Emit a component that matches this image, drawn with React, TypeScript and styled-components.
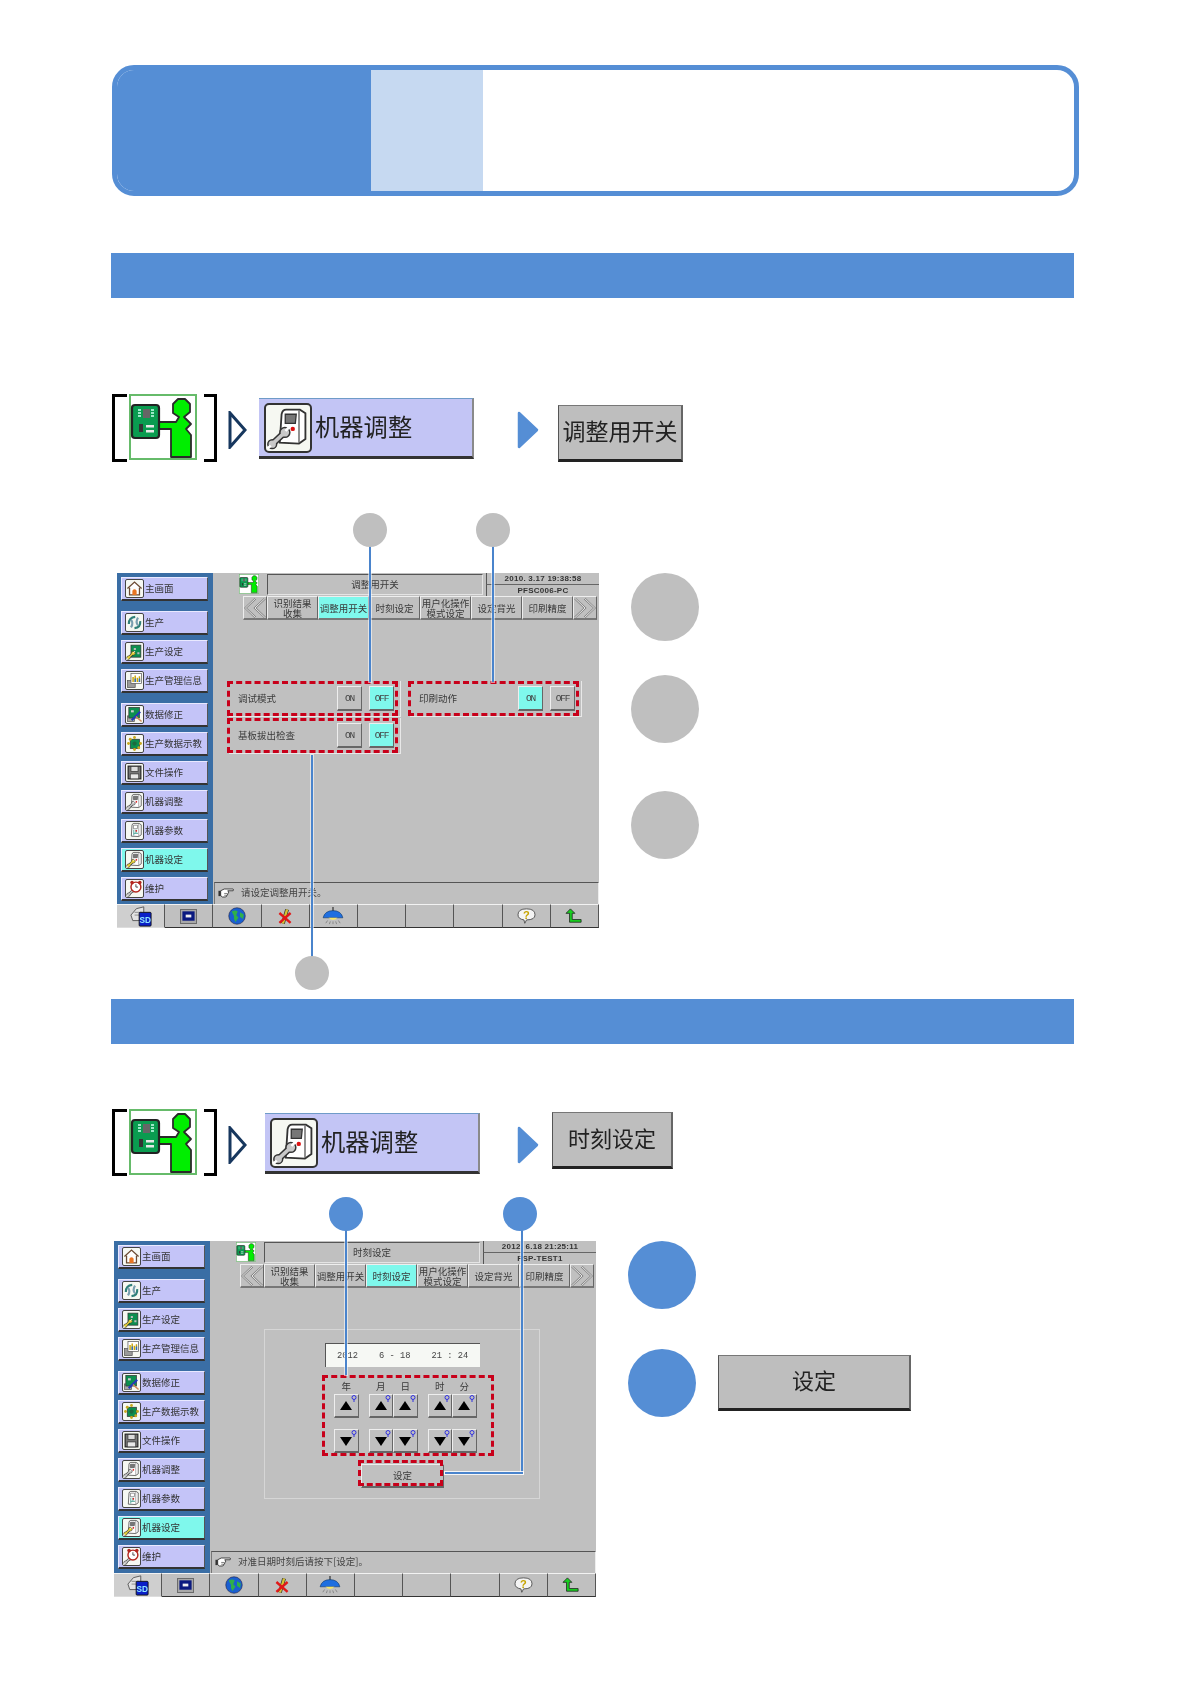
import React from "react";
import styled, { createGlobalStyle } from "styled-components";

const BLUE = "#558ed5";
const CJK = `"Noto Sans CJK SC", "Liberation Sans", sans-serif`;
const MONO = `"Liberation Mono", "DejaVu Sans Mono", monospace`;

const Global = createGlobalStyle`
  html, body { margin: 0; padding: 0; background: #fff; }
  body { font-family: ${CJK}; }
`;

const Page = styled.div`
  width: 1190px;
  height: 1684px;
  box-sizing: border-box;
  padding: 65px 0 0 112px;
  overflow: hidden;
`;

const TitleBox = styled.div`
  display: flex;
  width: 967px;
  height: 131px;
  box-sizing: border-box;
  border: 5px solid ${BLUE};
  border-radius: 22px;
  overflow: hidden;
`;
const TitleHead = styled.div`
  width: 254px;
  background: ${BLUE};
`;
const TitleNo = styled.div`
  width: 112px;
  background: #c6d9f1;
`;

const SectionBar = styled.div<{ $top: number }>`
  width: 963px;
  height: 45px;
  margin: ${(p) => p.$top}px 0 0 -1px;
  background: ${BLUE};
`;

const FlowRow = styled.div<{ $top: number; $h: number }>`
  display: flex;
  align-items: flex-start;
  height: ${(p) => p.$h}px;
  margin-top: ${(p) => p.$top}px;
`;
const Bracket = styled.div<{ $right?: boolean }>`
  width: ${(p) => (p.$right ? 13 : 15)}px;
  height: 100%;
  box-sizing: border-box;
  border: 3px solid #000;
  border-${(p) => (p.$right ? "left" : "right")}: 0;
  margin: ${(p) => (p.$right ? "0 0 0 7px" : "0 2px 0 0")};
`;
const FlowIcon = styled.div`
  width: 68px;
  height: 66px;
  flex: none;
  filter: blur(0.4px);
`;
const FlowMark = styled.div<{ $top: number; $left: number }>`
  display: flex;
  margin: ${(p) => p.$top}px 0 0 ${(p) => p.$left}px;
`;
const MachineButton = styled.div<{ $top: number; $left: number }>`
  display: flex;
  align-items: center;
  gap: 3px;
  width: 215px;
  height: 61px;
  box-sizing: border-box;
  margin: ${(p) => p.$top}px 0 0 ${(p) => p.$left}px;
  padding-left: 5px;
  background: #c3c5f5;
  border-top: 1px solid #6f9bc8;
  border-right: 2px solid #8a8a8a;
  border-bottom: 3px solid #333;
  font-size: 24.3px;
  color: #222;
  filter: blur(0.35px);
`;
const MachineLabel = styled.span`
  margin-bottom: 5px;
  white-space: nowrap;
`;
const MachineFrame = styled.div`
  width: 48px;
  height: 50px;
  flex: none;
  box-sizing: border-box;
  border: 2px solid #333;
  border-radius: 5px;
  background: #f6f8f2;
`;
const GrayButton = styled.div<{ $w: number; $h: number; $top: number; $left: number; $size: number }>`
  display: flex;
  align-items: center;
  justify-content: center;
  flex: none;
  width: ${(p) => p.$w}px;
  height: ${(p) => p.$h}px;
  box-sizing: border-box;
  margin: ${(p) => p.$top}px 0 0 ${(p) => p.$left}px;
  padding-bottom: 6px;
  background: #bebebe;
  border-left: 1px solid #555;
  border-top: 1px solid #777;
  border-right: 2px solid #666;
  border-bottom: 3px solid #222;
  font-size: ${(p) => p.$size}px;
  color: #222;
  white-space: nowrap;
  filter: blur(0.35px);
`;

const Stage = styled.div<{ $top: number; $inset: number }>`
  position: relative;
  display: flex;
  align-items: flex-start;
  margin-top: ${(p) => p.$top}px;
  padding-left: ${(p) => p.$inset}px;
`;
const Dot = styled.div<{ $x: number; $y: number; $color: string }>`
  position: absolute;
  left: ${(p) => p.$x - 17}px;
  top: ${(p) => p.$y - 17}px;
  width: 34px;
  height: 34px;
  border-radius: 50%;
  background: ${(p) => p.$color};
  z-index: 3;
`;
const VLine = styled.div<{ $x: number; $y: number; $h: number }>`
  position: absolute;
  left: ${(p) => p.$x - 1}px;
  top: ${(p) => p.$y}px;
  width: 2px;
  height: ${(p) => p.$h}px;
  background: #4a84cc;
  box-shadow: 0 0 0 1px rgba(255, 255, 255, 0.55);
  z-index: 2;
`;
const HLine = styled.div<{ $x: number; $y: number; $w: number }>`
  position: absolute;
  left: ${(p) => p.$x}px;
  top: ${(p) => p.$y - 1}px;
  width: ${(p) => p.$w}px;
  height: 2px;
  background: #4a84cc;
  box-shadow: 0 0 0 1px rgba(255, 255, 255, 0.85);
  z-index: 2;
`;

const Legend = styled.div`
  display: flex;
  flex-direction: column;
  margin-left: 32px;
`;
const LegendRow = styled.div<{ $top: number }>`
  display: flex;
  align-items: center;
  margin-top: ${(p) => p.$top}px;
`;
const LegendDot = styled.div<{ $color: string }>`
  width: 68px;
  height: 68px;
  border-radius: 50%;
  background: ${(p) => p.$color};
`;

const ScreenFrame = styled.div<{ $h: number }>`
  display: grid;
  grid-template-columns: 96px 1fr;
  grid-template-rows: 1fr 24px;
  width: 482px;
  height: ${(p) => p.$h}px;
  flex: none;
  background: #c0c0c0;
  color: #3a3a3a;
  font-size: 9.5px;
  line-height: 1;
  filter: blur(0.3px);
`;
const Sidebar = styled.div`
  display: flex;
  flex-direction: column;
  gap: 5px;
  padding: 4px 0 0 4px;
  background: #3a6ea5;
`;
const NavButton = styled.div<{ $active?: boolean; $group?: boolean }>`
  display: flex;
  align-items: center;
  gap: 1px;
  width: 87px;
  height: 24px;
  flex: none;
  box-sizing: border-box;
  margin-top: ${(p) => (p.$group ? 5 : 0)}px;
  padding-left: 3px;
  background: ${(p) => (p.$active ? "#7ff8ec" : "#c4c4f8")};
  border-top: 1px solid #e9e9ff;
  border-left: 1px solid #e9e9ff;
  border-right: 1px solid #555;
  border-bottom: 2px solid #333;
  color: #333;
  white-space: nowrap;
`;
const NavIcon = styled.span`
  display: flex;
  width: 19px;
  height: 19px;
  flex: none;
  box-sizing: border-box;
  border: 1px solid #444;
  border-radius: 2px;
  background: #f6f8f2;
`;
const Main = styled.div`
  display: flex;
  flex-direction: column;
  min-width: 0;
`;
const ScreenHead = styled.div`
  display: flex;
  height: 23px;
  flex: none;
  padding-left: 26px;
`;
const ScreenIcon = styled.div`
  width: 20px;
  height: 20px;
  margin: 1px 8px 0 0;
`;
const ScreenTitle = styled.div`
  display: flex;
  align-items: center;
  justify-content: center;
  width: 216px;
  height: 21px;
  box-sizing: border-box;
  margin-top: 1px;
  border: 1px solid #e4e4e4;
  border-top-color: #555;
  border-left-color: #555;
`;
const ClockBox = styled.div`
  display: flex;
  flex-direction: column;
  width: 113px;
  margin-left: 3px;
`;
const ClockLine = styled.div<{ $small?: boolean }>`
  height: ${(p) => (p.$small ? 11 : 12)}px;
  box-sizing: border-box;
  border-left: 1px solid #555;
  border-bottom: ${(p) => (p.$small ? 0 : "1px solid #666")};
  font: bold 8px/11px "Liberation Sans", sans-serif;
  letter-spacing: 0.25px;
  color: #333;
  text-align: center;
  white-space: pre;
`;
const TabBar = styled.div`
  display: flex;
  height: 24px;
  flex: none;
  margin-left: 30px;
`;
const Tab = styled.div<{ $active?: boolean; $chevron?: boolean }>`
  display: flex;
  align-items: center;
  justify-content: center;
  width: ${(p) => (p.$chevron ? 24 : 51)}px;
  box-sizing: border-box;
  background: ${(p) => (p.$active ? "#7ff8ec" : "#c0c0c0")};
  border-top: 1px solid #eee;
  border-left: 1px solid #eee;
  border-right: 1px solid #666;
  border-bottom: 2px solid #777;
  color: #3a3a3a;
  text-align: center;
  line-height: 10px;
  white-space: nowrap;
`;
const ChevronSvg = styled.svg<{ $flip?: boolean }>`
  transform: ${(p) => (p.$flip ? "scaleX(-1)" : "none")};
`;
const Content = styled.div`
  flex: 1;
  min-height: 0;
`;
const StatusBar = styled.div`
  display: flex;
  align-items: center;
  gap: 7px;
  height: 22px;
  flex: none;
  box-sizing: border-box;
  margin-left: 1px;
  padding: 0 0 2px 3px;
  border-top: 1px solid #555;
  border-left: 1px solid #777;
  border-right: 1px solid #eee;
  color: #444;
`;
const BottomBar = styled.div`
  grid-column: 1 / 3;
  display: grid;
  grid-template-columns: repeat(10, 1fr);
`;
const BottomCell = styled.div<{ $first?: boolean }>`
  display: flex;
  align-items: center;
  justify-content: center;
  box-sizing: border-box;
  border-top: 1px solid #f2f2f2;
  border-right: 1px solid #555;
  border-bottom: ${(p) => (p.$first ? "1px solid #ddd" : "1px solid #333")};
  background: ${(p) => (p.$first ? "#cfcfcf" : "#c0c0c0")};
`;

const SwitchGrid = styled.div`
  display: grid;
  grid-template-columns: 172px 172px;
  column-gap: 9px;
  row-gap: 1px;
  padding: 61px 0 0 16px;
`;
const SwitchPanel = styled.div`
  position: relative;
  display: flex;
  align-items: center;
  height: 36px;
  box-sizing: border-box;
  padding: 0 6px 0 9px;
  gap: 7px;
  border-right: 1px solid #e8e8e8;
  border-bottom: 1px solid #e8e8e8;
  &::after {
    content: "";
    position: absolute;
    inset: 0 2px 0 -2px;
    border: 3px dashed #c8001a;
  }
`;
const SwitchLabel = styled.span`
  flex: 1;
`;
const SwitchKey = styled.div<{ $on?: boolean }>`
  display: flex;
  align-items: center;
  justify-content: center;
  width: 25px;
  height: 25px;
  box-sizing: border-box;
  background: ${(p) => (p.$on ? "#7ff8ec" : "#c0c0c0")};
  border-top: 1px solid #eee;
  border-left: 1px solid #eee;
  border-right: 1px solid #666;
  border-bottom: 2px solid #666;
  font: 9.5px ${MONO};
  letter-spacing: -1.2px;
  color: #444;
`;

const GroupFrame = styled.div`
  width: 276px;
  height: 170px;
  box-sizing: border-box;
  margin: 41px 0 0 54px;
  padding: 13px 0 0 57px;
  border: 1px solid #d6d6d6;
`;
const DateBox = styled.div`
  display: flex;
  align-items: center;
  width: 155px;
  height: 24px;
  box-sizing: border-box;
  margin-left: 3px;
  padding-left: 11px;
  background: #f6f8f4;
  border-top: 1px solid #555;
  border-left: 1px solid #555;
  font: 8.75px ${MONO};
  color: #444;
  white-space: pre;
`;
const KeyBox = styled.div`
  display: flex;
  gap: 10px;
  width: 172px;
  height: 81px;
  box-sizing: border-box;
  margin-top: 8px;
  padding: 3px 0 0 9px;
  border: 3px dashed #c8001a;
`;
const KeyGroup = styled.div`
  display: flex;
`;
const KeyCol = styled.div`
  display: flex;
  flex-direction: column;
  width: 24.5px;
`;
const KeyName = styled.div`
  height: 11px;
  line-height: 11px;
  text-align: center;
`;
const ArrowKey = styled.div<{ $top: number }>`
  position: relative;
  display: flex;
  align-items: center;
  justify-content: center;
  height: 25px;
  box-sizing: border-box;
  margin-top: ${(p) => p.$top}px;
  border-top: 1px solid #eee;
  border-left: 1px solid #eee;
  border-right: 1px solid #666;
  border-bottom: 2px solid #666;
`;
const KeyMark = styled.svg`
  position: absolute;
  top: 0;
  right: 1px;
  width: 6px;
  height: 7px;
`;
const SetKey = styled.div`
  position: relative;
  display: flex;
  align-items: center;
  justify-content: center;
  width: 83px;
  height: 24px;
  box-sizing: border-box;
  margin: 8px 0 0 39px;
  border-top: 1px solid #eee;
  border-left: 1px solid #eee;
  border-right: 1px solid #666;
  border-bottom: 2px solid #666;
  &::after {
    content: "";
    position: absolute;
    inset: -5px 0 0 -4px;
    border: 3px dashed #c8001a;
  }
`;

const Wrench = ({ color = "#c9c9c9" }: { color?: string }) => (
  <g>
    <path d="M3.4 20.8 L10 14.6" stroke="#333" strokeWidth="3.6" strokeLinecap="round" />
    <circle cx="10.3" cy="14.4" r="2.7" fill={color} stroke="#333" strokeWidth="0.8" />
    <circle cx="3.4" cy="20.8" r="2.4" fill={color} stroke="#333" strokeWidth="0.8" />
    <path d="M3.4 20.8 L10 14.6" stroke={color} strokeWidth="2" />
    <path d="M10.6 13.6 L12.6 11.6 M2.6 21.6 L0.8 23.2" stroke="#fff" strokeWidth="1.4" />
  </g>
);

const Machine = ({ wrench, chart }: { wrench?: string; chart?: boolean }) => (
  <svg viewBox="0 0 24 24" width="100%" height="100%">
    <path d="M7.5 20 L8.5 4.5 Q9 2 11 2 H18.5 L21.5 4 V18 L18 20.5 Z" fill="#fff" stroke="#333" strokeWidth="1" />
    <path d="M18 2.5 V20" stroke="#555" strokeWidth="0.7" />
    <path d="M10.5 4.5 H16.5 L16 9.5 H10.5 Z" fill={chart ? "#fff" : "#777"} stroke="#333" strokeWidth="0.7" />
    {chart && <path d="M11 19 V11 M11 16 H17 M14 11 V16" stroke="#1a8a7a" strokeWidth="1" fill="none" />}
    <circle cx="14.6" cy="12.5" r="1.2" fill="#d11" />
    {!chart && <Wrench color={wrench} />}
  </svg>
);

const BoardPerson = () => (
  <svg viewBox="0 0 68 66" width="100%" height="100%">
    <rect x="1" y="1" width="66" height="64" fill="#fff" stroke="#66bb6a" strokeWidth="2" />
    <path
      d="M30 28 H47 L50 23 L44 19 V10 L49 5 H56 L61 10 V18 L55 23 L62 30 L57 35 L62 41 V63 H42 V35 H30 Z"
      fill="#00ee00"
      stroke="#2a2a2a"
      strokeWidth="1.8"
      strokeLinejoin="round"
    />
    <rect x="3" y="11" width="27" height="33" rx="3" fill="#0a9c50" stroke="#222" strokeWidth="2.2" />
    <rect x="14" y="15" width="7" height="9" fill="#666" />
    <path d="M9 16 h3 M9 19 h3 M9 22 h3 M22 16 h3 M22 19 h3 M22 22 h3" stroke="#cfe" strokeWidth="1.4" />
    <rect x="10" y="30" width="4" height="8" fill="#333" />
    <path d="M17 31 h8 v2.5 h-8 z M17 36 h8 v2.5 h-8 z" fill="#e8e8e8" />
  </svg>
);

const svgBox = { viewBox: "0 0 24 24", width: "100%", height: "100%" };

const navIcons: Record<string, React.ReactNode> = {
  home: (
    <svg {...svgBox}>
      <path d="M2 12 L12 3 L22 12 M5 11 V21 H19 V11" fill="#fff" stroke="#6b4a32" strokeWidth="1.8" />
      <path d="M9 21 V15 Q12 11 15 15 V21 Z" fill="#e87522" />
    </svg>
  ),
  swirl: (
    <svg {...svgBox}>
      <g fill="none" stroke="#2f7f78" strokeWidth="3">
        <path d="M4 14 Q4 5 13 4" />
        <path d="M20 10 Q21 19 12 20" />
        <path d="M7 19 Q11 13 7 8" stroke="#7a9fb0" />
        <path d="M17 5 Q13 11 17 16" stroke="#7a9fb0" />
      </g>
    </svg>
  ),
  prodset: (
    <svg {...svgBox}>
      <rect x="7" y="3" width="14" height="17" fill="#0d8f4f" stroke="#333" />
      <path d="M11 7 h3 v3 h-3 z M16 13 h3 v3 h-3 z" fill="#bbb" />
      <Wrench color="#e8d23c" />
    </svg>
  ),
  info: (
    <svg {...svgBox}>
      <rect x="2" y="12" width="11" height="10" fill="#9a9a9a" stroke="#555" />
      <rect x="7" y="2" width="15" height="14" fill="#fff" stroke="#555" />
      <path d="M10 14 V7 M13 14 V5 M16 14 V8 M19 14 V6" stroke="#c9a400" strokeWidth="2" />
      <path d="M13 14 V9 M19 14 V9" stroke="#2a6cc0" strokeWidth="2" />
    </svg>
  ),
  fix: (
    <svg {...svgBox}>
      <rect x="2" y="14" width="10" height="8" fill="#a8a8a8" stroke="#555" />
      <rect x="4" y="2" width="15" height="15" fill="#0d8f4f" stroke="#333" />
      <path d="M7 6 h4 v3 h-4 z" fill="#ccc" />
      <path d="M8 20 L20 8" stroke="#2438b8" strokeWidth="3" />
      <path d="M14 15 L22 22" stroke="#d08a5a" strokeWidth="2" />
    </svg>
  ),
  teach: (
    <svg {...svgBox}>
      <rect x="6" y="6" width="13" height="13" fill="#0d8f4f" stroke="#333" />
      <g fill="#c9a81c">
        <circle cx="12" cy="3.5" r="2" />
        <circle cx="12" cy="20.5" r="2" />
        <circle cx="3.5" cy="12" r="2" />
        <circle cx="20.5" cy="12" r="2" />
        <circle cx="6" cy="6" r="2" />
        <circle cx="18" cy="18" r="2" />
      </g>
      <circle cx="12" cy="12" r="3" fill="#1c6b3f" />
    </svg>
  ),
  file: (
    <svg {...svgBox}>
      <rect x="3" y="3" width="18" height="18" fill="#777" stroke="#222" strokeWidth="1.6" />
      <rect x="7" y="3.5" width="10" height="7" fill="#ddd" stroke="#333" />
      <rect x="6" y="14" width="12" height="7" fill="#e8e8e8" stroke="#333" />
    </svg>
  ),
  adjust: <Machine />,
  param: <Machine chart />,
  set: <Machine wrench="#e8d23c" />,
  maint: (
    <svg {...svgBox}>
      <Wrench />
      <circle cx="14" cy="10" r="7" fill="#fff" stroke="#b3261e" strokeWidth="2" />
      <path d="M14 6 V10 H17" stroke="#333" strokeWidth="1.2" fill="none" />
      <circle cx="8.5" cy="3.5" r="2.5" fill="#b3261e" />
      <circle cx="19.5" cy="3.5" r="2.5" fill="#b3261e" />
    </svg>
  ),
};

const navItems = [
  { key: "home", text: "主画面" },
  { key: "swirl", text: "生产", group: true },
  { key: "prodset", text: "生产设定" },
  { key: "info", text: "生产管理信息" },
  { key: "fix", text: "数据修正", group: true },
  { key: "teach", text: "生产数据示教" },
  { key: "file", text: "文件操作" },
  { key: "adjust", text: "机器调整" },
  { key: "param", text: "机器参数" },
  { key: "set", text: "机器设定", active: true },
  { key: "maint", text: "维护" },
];

const tabs = [
  ["识别结果", "收集"],
  ["调整用开关"],
  ["时刻设定"],
  ["用户化操作", "模式设定"],
  ["设定背光"],
  ["印刷精度"],
];

const Chevron = ({ flip }: { flip?: boolean }) => (
  <ChevronSvg $flip={flip} viewBox="0 0 23 22" width="23" height="22">
    <path d="M12 1 L1.5 11 L12 21 M22 1 L11.5 11 L22 21" fill="none" stroke="#7e7e7e" strokeWidth="2.2" />
    <path d="M12 1 L1.5 11 L12 21 M22 1 L11.5 11 L22 21" fill="none" stroke="#ededed" strokeWidth="1" />
  </ChevronSvg>
);

const Hand = () => (
  <svg viewBox="0 0 18 11" width="16" height="10">
    <path
      d="M3 3 L7 1 H17 Q18 2 17 3 H11 L12 4.5 Q12 6 11 6.5 Q11 8 10 8 Q10 10 8 10 H5 L3 8.5 Z"
      fill="#fff"
      stroke="#333"
      strokeWidth="1"
    />
    <path d="M0.5 3 H3 V9 H0.5 Z" fill="#333" />
    <path d="M7 6 H11 M7 8 H10" stroke="#333" strokeWidth="0.7" />
  </svg>
);

const bottomIcons: React.ReactNode[] = [
  <svg viewBox="0 0 24 24" width="22" height="22" key="sd">
    <path d="M1 11 L7 4 L15 2 V17 H3 Z" fill="#e2e2e2" stroke="#555" />
    <path d="M5 8 H13 M5 11 H13" stroke="#888" />
    <rect x="10" y="8" width="13" height="15" rx="1" fill="#0a1fc8" stroke="#111" />
    <text x="16.5" y="20" fontSize="9" fontWeight="700" fill="#8fe6ff" textAnchor="middle" fontFamily="Liberation Sans">SD</text>
  </svg>,
  <svg viewBox="0 0 18 16" width="17" height="15" key="mon">
    <rect x="0.5" y="0.5" width="17" height="15" fill="#a8a8a8" stroke="#666" />
    <rect x="2.5" y="2.5" width="13" height="10" fill="#0b1a80" />
    <rect x="6" y="6" width="6" height="3" fill="#eee" />
  </svg>,
  <svg viewBox="0 0 24 24" width="18" height="18" key="globe">
    <circle cx="12" cy="12" r="11" fill="#1a5fd0" stroke="#224" strokeWidth="0.8" />
    <path d="M5 6 Q10 3 13 6 L11 11 L14 14 L10 20 Q7 16 8 12 Z" fill="#2fb04a" />
    <path d="M16 7 L21 10 L20 16 L16 13 Z" fill="#2fb04a" />
  </svg>,
  <svg viewBox="0 0 20 24" width="14" height="17" key="x">
    <path d="M13 2 L7 22" stroke="#333" strokeWidth="5.5" />
    <path d="M13 2 L7 22" stroke="#d7c233" strokeWidth="3.5" />
    <path d="M2 7 L18 21 M18 7 L2 21" stroke="#e01818" strokeWidth="3.4" />
  </svg>,
  <svg viewBox="0 0 24 20" width="22" height="18" key="lamp">
    <path d="M12 0 V5" stroke="#222" strokeWidth="1.2" />
    <path d="M1 12 Q3 4 12 4 Q21 4 23 12 Z" fill="#1f6fe0" stroke="#135" strokeWidth="0.6" />
    <path d="M7 12 Q12 17 17 12 Z" fill="#f5e56a" />
    <path d="M6 15 L4 18 M12 16 V19 M18 15 L20 18 M9 16 L8 19 M15 16 L16 19" stroke="#666" strokeWidth="0.7" />
  </svg>,
  null,
  null,
  null,
  <svg viewBox="0 0 22 20" width="19" height="17" key="help">
    <path d="M11 1 Q21 1 21 8 Q21 14 11 14 L9 18 L8 14 Q1 13 1 8 Q1 1 11 1 Z" fill="#f4f4f4" stroke="#444" />
    <text x="11" y="12.5" fontSize="13" fontWeight="700" fill="#c7a400" textAnchor="middle" fontFamily="Liberation Sans">?</text>
  </svg>,
  <svg viewBox="0 0 20 18" width="18" height="16" key="back">
    <path d="M6 1 L11 6 H8 V13 H18 V16 H5 V6 H1 Z" fill="#18d020" stroke="#222" strokeWidth="0.9" />
  </svg>,
];

const Triangle = ({ down }: { down?: boolean }) => (
  <svg viewBox="0 0 12 10" width="12" height="10">
    <path d={down ? "M0 1 H12 L6 10 Z" : "M0 9 H12 L6 0 Z"} fill="#000" />
  </svg>
);

const Screen = (props: {
  h: number;
  title: string;
  clock: string;
  host: string;
  active: number;
  status: string;
  children: React.ReactNode;
}) => (
  <ScreenFrame $h={props.h}>
    <Sidebar>
      {navItems.map((n) => (
        <NavButton key={n.key} $active={n.active} $group={n.group}>
          <NavIcon>{navIcons[n.key]}</NavIcon>
          {n.text}
        </NavButton>
      ))}
    </Sidebar>
    <Main>
      <ScreenHead>
        <ScreenIcon>
          <BoardPerson />
        </ScreenIcon>
        <ScreenTitle>{props.title}</ScreenTitle>
        <ClockBox>
          <ClockLine>{props.clock}</ClockLine>
          <ClockLine $small>{props.host}</ClockLine>
        </ClockBox>
      </ScreenHead>
      <TabBar>
        <Tab $chevron>
          <Chevron />
        </Tab>
        {tabs.map((t, i) => (
          <Tab key={t[0]} $active={i === props.active}>
            <div>
              {t.map((line) => (
                <div key={line}>{line}</div>
              ))}
            </div>
          </Tab>
        ))}
        <Tab $chevron>
          <Chevron flip />
        </Tab>
      </TabBar>
      <Content>{props.children}</Content>
      <StatusBar>
        <Hand />
        {props.status}
      </StatusBar>
    </Main>
    <BottomBar>
      {bottomIcons.map((icon, i) => (
        <BottomCell key={i} $first={i === 0}>
          {icon}
        </BottomCell>
      ))}
    </BottomBar>
  </ScreenFrame>
);

const Switch = ({ label, on }: { label: string; on?: boolean }) => (
  <SwitchPanel>
    <SwitchLabel>{label}</SwitchLabel>
    <SwitchKey $on={on}>ON</SwitchKey>
    <SwitchKey $on={!on}>OFF</SwitchKey>
  </SwitchPanel>
);

const Mark = () => (
  <KeyMark viewBox="0 0 6 7">
    <circle cx="3" cy="2.5" r="2" fill="none" stroke="#3030e0" strokeWidth="1" />
    <path d="M3 4.5 V7" stroke="#3030e0" />
  </KeyMark>
);

const KeyColumn = ({ name }: { name: string }) => (
  <KeyCol>
    <KeyName>{name}</KeyName>
    <ArrowKey $top={2}>
      <Triangle />
      <Mark />
    </ArrowKey>
    <ArrowKey $top={11}>
      <Triangle down />
      <Mark />
    </ArrowKey>
  </KeyCol>
);

const OutlineArrow = () => (
  <svg viewBox="0 0 19 38" width="19" height="38">
    <path d="M2 2 L17 19 L2 36 Z" fill="#fff" stroke="#17375e" strokeWidth="3" />
  </svg>
);
const BlueArrow = () => (
  <svg viewBox="0 0 22 38" width="22" height="38">
    <path d="M2 2 L20 19 L2 36 Z" fill={BLUE} stroke={BLUE} strokeWidth="2.5" strokeLinejoin="round" />
  </svg>
);

const Flow = (props: {
  top: number;
  h: number;
  machineTop: number;
  machineLeft: number;
  blueLeft: number;
  children: React.ReactNode;
}) => (
  <FlowRow $top={props.top} $h={props.h}>
    <Bracket />
    <FlowIcon>
      <BoardPerson />
    </FlowIcon>
    <Bracket $right />
    <FlowMark $top={17} $left={11}>
      <OutlineArrow />
    </FlowMark>
    <MachineButton $top={props.machineTop} $left={props.machineLeft}>
      <MachineFrame>
        <Machine />
      </MachineFrame>
      <MachineLabel>机器调整</MachineLabel>
    </MachineButton>
    <FlowMark $top={17} $left={props.blueLeft}>
      <BlueArrow />
    </FlowMark>
    {props.children}
  </FlowRow>
);

export default function App() {
  return (
    <Page>
      <Global />
      <TitleBox>
        <TitleHead />
        <TitleNo />
      </TitleBox>

      <SectionBar $top={57} />
      <Flow top={96} h={68} machineTop={4} machineLeft={12} blueLeft={43}>
        <GrayButton $w={125} $h={57} $top={11} $left={19} $size={23}>
          调整用开关
        </GrayButton>
      </Flow>
      <Stage $top={111} $inset={5}>
        <VLine $x={258} $y={-43} $h={152} />
        <VLine $x={381} $y={-43} $h={152} />
        <VLine $x={200} $y={182} $h={218} />
        <Dot $x={258} $y={-43} $color="#bfbfbf" />
        <Dot $x={381} $y={-43} $color="#bfbfbf" />
        <Dot $x={200} $y={400} $color="#bfbfbf" />
        <Screen
          h={355}
          title="调整用开关"
          clock="2010. 3.17 19:38:58"
          host="PFSC006-PC"
          active={1}
          status="请设定调整用开关。"
        >
          <SwitchGrid>
            <Switch label="调试模式" />
            <Switch label="印刷动作" on />
            <Switch label="基板拔出检查" />
          </SwitchGrid>
        </Screen>
        <Legend>
          <LegendRow $top={0}>
            <LegendDot $color="#bfbfbf" />
          </LegendRow>
          <LegendRow $top={34}>
            <LegendDot $color="#bfbfbf" />
          </LegendRow>
          <LegendRow $top={48}>
            <LegendDot $color="#bfbfbf" />
          </LegendRow>
        </Legend>
      </Stage>

      <SectionBar $top={71} />
      <Flow top={65} h={67} machineTop={4} machineLeft={18} blueLeft={37}>
        <GrayButton $w={121} $h={57} $top={3} $left={13} $size={22}>
          时刻设定
        </GrayButton>
      </Flow>
      <Stage $top={65} $inset={2}>
        <VLine $x={234} $y={-27} $h={161} />
        <VLine $x={410} $y={-27} $h={259} />
        <HLine $x={333} $y={232} $w={78} />
        <Dot $x={234} $y={-27} $color={BLUE} />
        <Dot $x={408} $y={-27} $color={BLUE} />
        <Screen
          h={356}
          title="时刻设定"
          clock="2012. 6.18 21:25:11"
          host="FSP-TEST1"
          active={2}
          status="对准日期时刻后请按下[设定]。"
        >
          <GroupFrame>
            <DateBox>{"2012    6 - 18    21 : 24"}</DateBox>
            <KeyBox>
              <KeyGroup>
                <KeyColumn name="年" />
              </KeyGroup>
              <KeyGroup>
                <KeyColumn name="月" />
                <KeyColumn name="日" />
              </KeyGroup>
              <KeyGroup>
                <KeyColumn name="时" />
                <KeyColumn name="分" />
              </KeyGroup>
            </KeyBox>
            <SetKey>设定</SetKey>
          </GroupFrame>
        </Screen>
        <Legend>
          <LegendRow $top={0}>
            <LegendDot $color={BLUE} />
          </LegendRow>
          <LegendRow $top={40}>
            <LegendDot $color={BLUE} />
            <GrayButton $w={193} $h={56} $top={0} $left={22} $size={22}>
              设定
            </GrayButton>
          </LegendRow>
        </Legend>
      </Stage>
    </Page>
  );
}
